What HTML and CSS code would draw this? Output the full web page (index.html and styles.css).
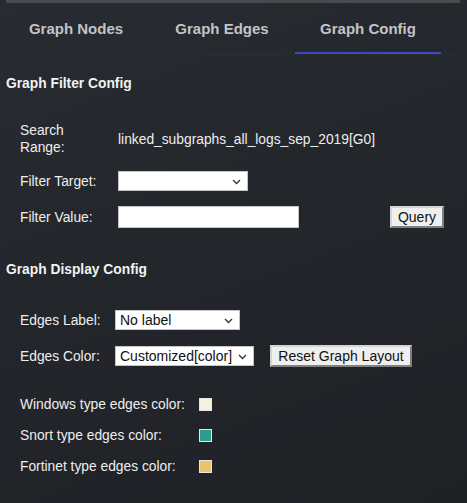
FILE: index.html
```html
<!DOCTYPE html>
<html>
<head>
<meta charset="utf-8">
<link rel="stylesheet" href="styles.css">
</head>
<body>
<div class="topbar"></div>
<nav class="tabs">
  <div class="tab">Graph Nodes</div>
  <div class="tab">Graph Edges</div>
  <div class="tab active">Graph Config</div>
</nav>
<main class="content">
  <h2 class="heading first">Graph Filter Config</h2>
  <div class="filter-grid">
    <div class="label wrap">Search<br>Range:</div>
    <div class="value">linked_subgraphs_all_logs_sep_2019[G0]</div>
    <div></div>

    <div class="label">Filter Target:</div>
    <div><div class="select-wrap w130"><select class="select"><option></option></select><svg class="chev" width="9" height="6" viewBox="0 0 9 6"><path d="M1 1 L4.5 4.5 L8 1" fill="none" stroke="#333" stroke-width="1.3"/></svg></div></div>
    <div></div>

    <div class="label">Filter Value:</div>
    <div><input class="text-input" type="text"></div>
    <div><button class="btn query">Query</button></div>
  </div>

  <h2 class="heading second">Graph Display Config</h2>
  <div class="display-grid">
    <div class="label">Edges Label:</div>
    <div class="controls"><div class="select-wrap w125"><select class="select"><option>No label</option></select><svg class="chev" width="9" height="6" viewBox="0 0 9 6"><path d="M1 1 L4.5 4.5 L8 1" fill="none" stroke="#333" stroke-width="1.3"/></svg></div></div>

    <div class="label">Edges Color:</div>
    <div class="controls"><div class="select-wrap w139"><select class="select"><option>Customized[color]</option></select><svg class="chev" width="9" height="6" viewBox="0 0 9 6"><path d="M1 1 L4.5 4.5 L8 1" fill="none" stroke="#333" stroke-width="1.3"/></svg></div><button class="btn reset">Reset Graph Layout</button></div>
  </div>

  <div class="color-grid">
    <div class="label">Windows type edges color:</div>
    <div class="swatch windows"></div>
    <div class="label">Snort type edges color:</div>
    <div class="swatch snort"></div>
    <div class="label">Fortinet type edges color:</div>
    <div class="swatch fortinet"></div>
  </div>
</main>
</body>
</html>
```
FILE: styles.css
```css
html, body {
  margin: 0;
  padding: 0;
}
body {
  width: 467px;
  height: 503px;
  overflow: hidden;
  background: linear-gradient(160deg, #282b31 0%, #23262b 45%, #1f2125 100%);
  font-family: "Liberation Sans", Arial, sans-serif;
  color: #eeeeee;
}
.topbar {
  margin: 0 7px 0 6px;
  height: 3px;
  background: #4a4b4e;
}
.tabs {
  display: flex;
  height: 51px;
  margin: 0 7px 0 3px;
  border-bottom: 1px solid #2b2e33;
}
.tab {
  width: 146px;
  display: flex;
  align-items: center;
  justify-content: center;
  font-weight: bold;
  font-size: 15px;
  color: #c2c4c7;
  box-sizing: border-box;
  padding-top: 2px;
  border-bottom: 2px solid transparent;
}
.tab.active {
  border-bottom-color: #3b4bc0;
}
.content {
  padding: 0 6px;
}
.heading {
  margin: 0;
  font-size: 13.8px;
  line-height: 16px;
  font-weight: bold;
  color: #f2f2f2;
}
.heading.first {
  margin-top: 21px;
}
.label {
  font-size: 13.8px;
  line-height: 17px;
  color: #eeeeee;
}
.filter-grid {
  margin: 30px 0 0 14px;
  display: grid;
  grid-template-columns: 98px 272px 54px;
  row-gap: 15px;
  align-items: center;
}
.value {
  font-size: 13.8px;
  color: #eeeeee;
}
.select-wrap {
  position: relative;
  height: 20px;
}
.select-wrap.w130 { width: 130px; }
.select-wrap.w125 { width: 125px; }
.select-wrap.w139 { width: 139px; }
.select {
  appearance: none;
  -webkit-appearance: none;
  width: 100%;
  height: 20px;
  margin: 0;
  padding: 0 0 0 4px;
  border: 1px solid #c4c4c4;
  border-radius: 0;
  background: #ffffff;
  font-family: "Liberation Sans", Arial, sans-serif;
  font-size: 14px;
  color: #111;
  display: block;
}
.chev {
  position: absolute;
  right: 7px;
  top: 8px;
  pointer-events: none;
}
.text-input {
  display: block;
  box-sizing: border-box;
  width: 181px;
  height: 22px;
  margin: 0;
  border: 1px solid #c4c4c4;
  border-radius: 0;
  background: #ffffff;
  padding: 0 3px;
}
.btn {
  display: block;
  box-sizing: border-box;
  margin: 0;
  padding: 0;
  height: 22px;
  background: #efefef;
  border: 2px outset #d4d4d4;
  border-radius: 0;
  font-family: "Liberation Sans", Arial, sans-serif;
  font-size: 14px;
  color: #111;
}
.btn.query {
  width: 54px;
}
.btn.reset {
  width: 142px;
  margin-left: 16px;
}
.heading.second {
  margin-top: 34px;
}
.display-grid {
  margin: 32px 0 0 14px;
  display: grid;
  grid-template-columns: 95px auto;
  row-gap: 15px;
  align-items: center;
}
.controls {
  display: flex;
  align-items: center;
}
.color-grid {
  margin: 29px 0 0 14px;
  display: grid;
  grid-template-columns: 179px 13px;
  row-gap: 14px;
  align-items: center;
}
.swatch {
  width: 13px;
  height: 13px;
  box-sizing: border-box;
  border: 1px solid #e6e6e6;
}
.swatch.windows { background: #f4f1e0; }
.swatch.snort { background: #2a9d8f; }
.swatch.fortinet { background: #e9c46a; }
```
